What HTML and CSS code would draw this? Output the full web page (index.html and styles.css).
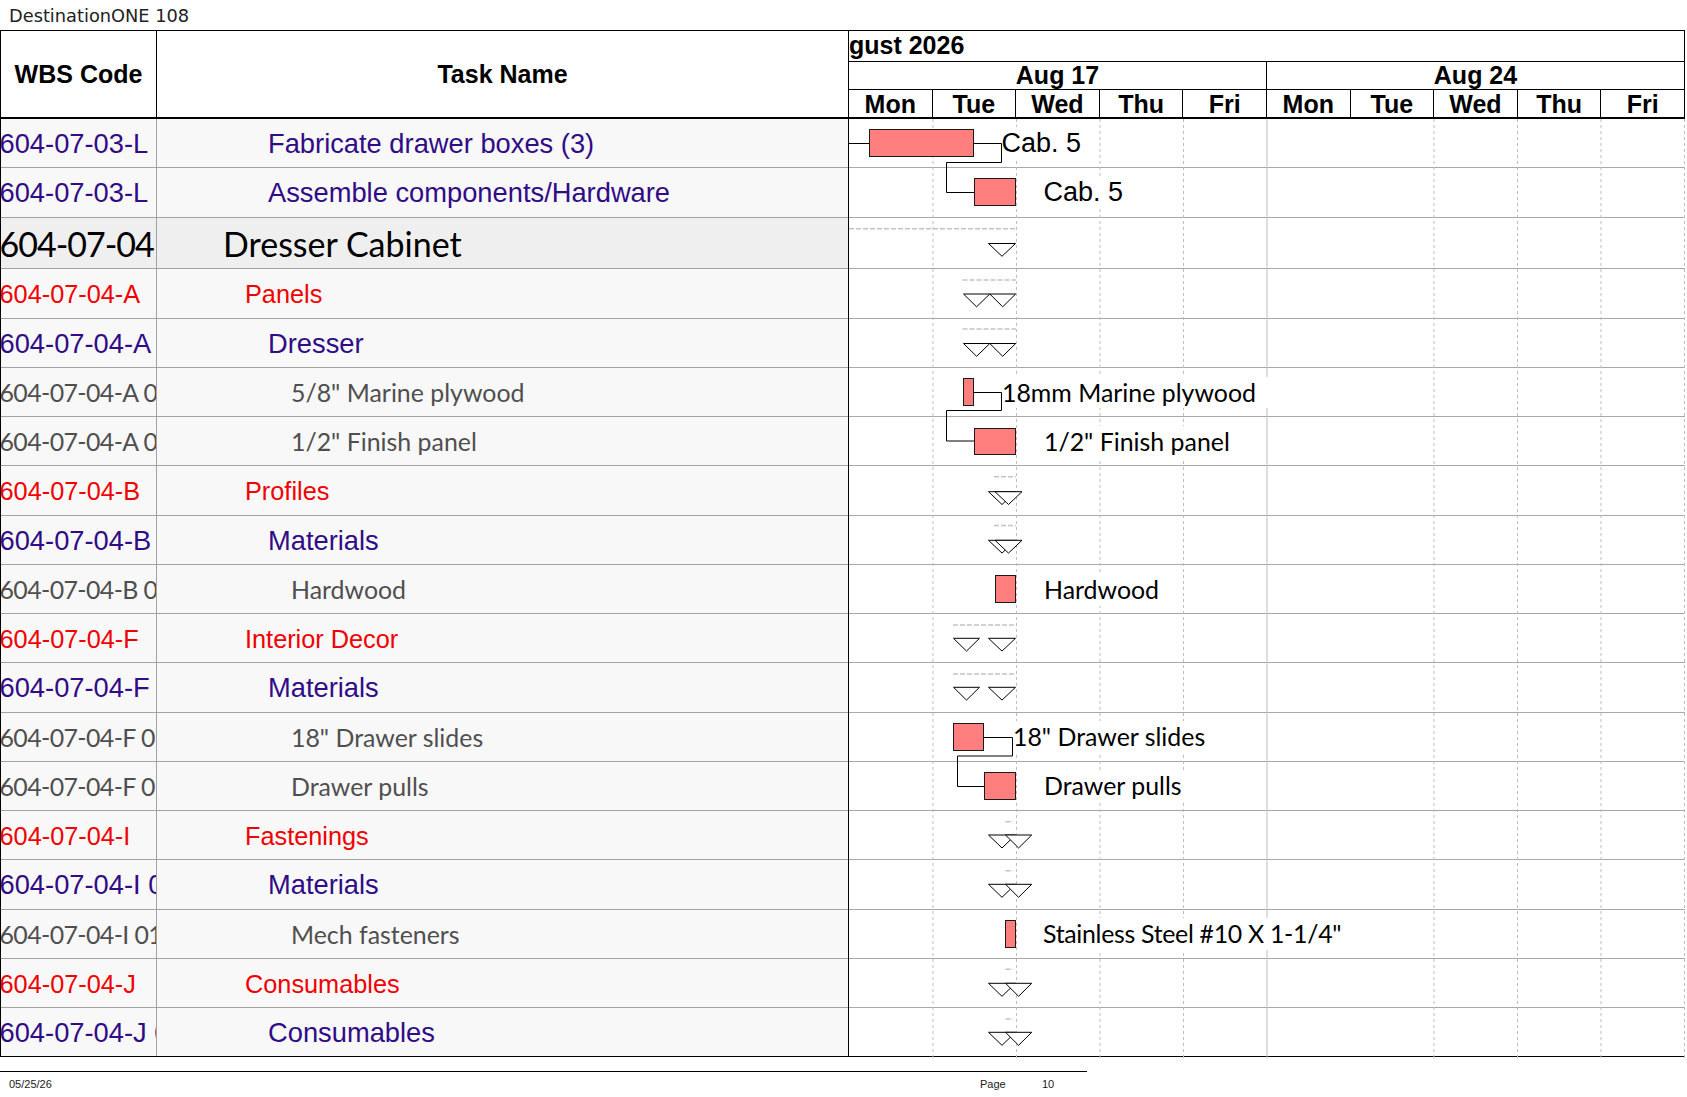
FILE: index.html
```html
<!DOCTYPE html>
<html>
<head>
<meta charset="utf-8">
<title>DestinationONE 108</title>
<link rel="stylesheet" href="styles.css">
</head>
<body>
<div class="title">DestinationONE 108</div>
<div class="sheet">
  <div class="left">
    <div class="lhead">
      <div class="hcell hwbs">WBS Code</div>
      <div class="hcell">Task Name</div>
    </div>
    <div class="lbody">
      <div class="row ta"><div class="wbs">604-07-03-L</div><div class="task">Fabricate drawer boxes (3)</div></div>
      <div class="row ta"><div class="wbs">604-07-03-L</div><div class="task">Assemble components/Hardware</div></div>
      <div class="row tk big"><div class="wbs">604-07-04</div><div class="task">Dresser Cabinet</div></div>
      <div class="row tr"><div class="wbs">604-07-04-A</div><div class="task">Panels</div></div>
      <div class="row ta"><div class="wbs">604-07-04-A</div><div class="task">Dresser</div></div>
      <div class="row tg"><div class="wbs">604-07-04-A 0</div><div class="task">5/8" Marine plywood</div></div>
      <div class="row tg"><div class="wbs">604-07-04-A 0</div><div class="task">1/2" Finish panel</div></div>
      <div class="row tr"><div class="wbs">604-07-04-B</div><div class="task">Profiles</div></div>
      <div class="row ta"><div class="wbs">604-07-04-B</div><div class="task">Materials</div></div>
      <div class="row tg"><div class="wbs">604-07-04-B 0</div><div class="task">Hardwood</div></div>
      <div class="row tr"><div class="wbs">604-07-04-F</div><div class="task">Interior Decor</div></div>
      <div class="row ta"><div class="wbs">604-07-04-F</div><div class="task">Materials</div></div>
      <div class="row tg"><div class="wbs">604-07-04-F 0</div><div class="task">18" Drawer slides</div></div>
      <div class="row tg"><div class="wbs">604-07-04-F 0</div><div class="task">Drawer pulls</div></div>
      <div class="row tr"><div class="wbs">604-07-04-I</div><div class="task">Fastenings</div></div>
      <div class="row ta"><div class="wbs">604-07-04-I 0</div><div class="task">Materials</div></div>
      <div class="row tg"><div class="wbs">604-07-04-I 01</div><div class="task">Mech fasteners</div></div>
      <div class="row tr"><div class="wbs">604-07-04-J</div><div class="task">Consumables</div></div>
      <div class="row ta"><div class="wbs">604-07-04-J 0</div><div class="task">Consumables</div></div>
    </div>
  </div>
  <div class="gantt">
    <div class="ghead">
      <div class="month">gust 2026</div>
      <div class="weeks"><div class="week">Aug 17</div><div class="week">Aug 24</div></div>
      <div class="days">
        <div class="day">Mon</div><div class="day">Tue</div><div class="day">Wed</div><div class="day">Thu</div><div class="day">Fri</div>
        <div class="day">Mon</div><div class="day">Tue</div><div class="day">Wed</div><div class="day">Thu</div><div class="day">Fri</div>
      </div>
    </div>
    <div class="gbody">
      <svg class="grid" width="836" height="939" viewBox="0 0 836 939">
        <g class="dayline">
          <line x1="84" y1="0" x2="84" y2="939"/>
          <line x1="167.5" y1="0" x2="167.5" y2="939"/>
          <line x1="251" y1="0" x2="251" y2="939"/>
          <line x1="334.5" y1="0" x2="334.5" y2="939"/>
          <line x1="585" y1="0" x2="585" y2="939"/>
          <line x1="668.5" y1="0" x2="668.5" y2="939"/>
          <line x1="752" y1="0" x2="752" y2="939"/>
          <line x1="835.5" y1="0" x2="835.5" y2="939"/>
        </g>
        <line class="weekline" x1="418" y1="0" x2="418" y2="939"/>
      </svg>
      <div class="grow"></div><div class="grow"></div><div class="grow big"></div><div class="grow"></div>
      <div class="grow"></div><div class="grow"></div><div class="grow"></div><div class="grow"></div>
      <div class="grow"></div><div class="grow"></div><div class="grow"></div><div class="grow"></div>
      <div class="grow"></div><div class="grow"></div><div class="grow"></div><div class="grow"></div>
      <div class="grow"></div><div class="grow"></div><div class="grow"></div>
      <svg class="chart" width="836" height="939" viewBox="0 0 836 939">
        <g class="lblbg">
          <rect x="153" y="8" width="94" height="32"/>
          <rect x="195" y="57" width="94" height="32"/>
          <rect x="153" y="258" width="268" height="31"/>
          <rect x="195" y="307" width="196" height="32"/>
          <rect x="195" y="455" width="126" height="32"/>
          <rect x="164" y="602" width="204" height="32"/>
          <rect x="195" y="651" width="148" height="32"/>
          <rect x="194" y="799" width="310" height="32"/>
        </g>
        <g class="sumline">
          <line x1="0" y1="109.7" x2="167" y2="109.7"/>
          <line x1="113.5" y1="161" x2="167" y2="161"/>
          <line x1="113.5" y1="210" x2="167" y2="210"/>
          <line x1="145" y1="357.7" x2="167" y2="357.7"/>
          <line x1="145" y1="406.5" x2="167" y2="406.5"/>
          <line x1="104" y1="506" x2="167" y2="506"/>
          <line x1="104" y1="555" x2="167" y2="555"/>
          <line x1="156.5" y1="702.7" x2="164" y2="702.7"/>
          <line x1="156.5" y1="751.7" x2="164" y2="751.7"/>
          <line x1="156.5" y1="850.3" x2="164" y2="850.3"/>
          <line x1="156.5" y1="900" x2="164" y2="900"/>
        </g>
        <g class="link">
          <polyline points="0,24.5 20.5,24.5"/>
          <polyline points="124.5,24.5 152.5,24.5 152.5,43.5 97.5,43.5 97.5,73.5 125.5,73.5"/>
          <polyline points="124.5,273.5 152.5,273.5 152.5,291.5 97.5,291.5 97.5,322 125.5,322"/>
          <polyline points="134.5,618.5 163.5,618.5 163.5,637 108.5,637 108.5,667.5 135.5,667.5"/>
        </g>
        <g class="bar">
          <rect x="20.5" y="10.5" width="104" height="27"/>
          <rect x="125.5" y="59.5" width="41" height="27"/>
          <rect x="114.5" y="259.5" width="10" height="27"/>
          <rect x="125.5" y="309.5" width="41" height="26"/>
          <rect x="146.5" y="456.5" width="20" height="27"/>
          <rect x="104.5" y="604.5" width="30" height="27"/>
          <rect x="135.5" y="653.5" width="31" height="27"/>
          <rect x="156.5" y="801.5" width="10" height="27"/>
        </g>
        <g class="tri">
          <polygon points="139.5,124.5 166.5,124.5 153,137.3"/>
          <polygon points="114.5,175 140.8,175 127.6,187.8"/>
          <polygon points="140.8,175 166.7,175 153.7,187.8"/>
          <polygon points="114.5,224.5 140.8,224.5 127.6,237.3"/>
          <polygon points="140.8,224.5 166.7,224.5 153.7,237.3"/>
          <polygon points="139.5,372.7 166.5,372.7 153,385.5"/>
          <polygon points="146,372.7 173,372.7 159.5,385.5"/>
          <polygon points="139.5,421.3 166.5,421.3 153,434.1"/>
          <polygon points="146,421.3 173,421.3 159.5,434.1"/>
          <polygon points="104.5,519.3 130.5,519.3 117.5,532.1"/>
          <polygon points="139.5,519.3 166.5,519.3 153,532.1"/>
          <polygon points="104.5,568.3 130.5,568.3 117.5,581.1"/>
          <polygon points="139.5,568.3 166.5,568.3 153,581.1"/>
          <polygon points="139.5,716 166.5,716 153,729"/>
          <polygon points="156.5,716 182.7,716 169.6,729"/>
          <polygon points="139.5,765.3 166.5,765.3 153,778.3"/>
          <polygon points="156.5,765.3 182.7,765.3 169.6,778.3"/>
          <polygon points="139.5,864.3 166.5,864.3 153,877.3"/>
          <polygon points="156.5,864.3 182.7,864.3 169.6,877.3"/>
          <polygon points="139.5,913.3 166.5,913.3 153,926.3"/>
          <polygon points="156.5,913.3 182.7,913.3 169.6,926.3"/>
        </g>
        <text class="lbl-a" x="152.5" y="32.7">Cab. 5</text>
        <text class="lbl-a" x="194.5" y="81.7">Cab. 5</text>
        <text class="lbl-c" x="153" y="282.7">18mm Marine plywood</text>
        <text class="lbl-c" x="195" y="332">1/2" Finish panel</text>
        <text class="lbl-c" x="195" y="480">Hardwood</text>
        <text class="lbl-c" x="164" y="627">18" Drawer slides</text>
        <text class="lbl-c" x="195" y="676.3">Drawer pulls</text>
        <text class="lbl-c lbl-tight" x="194" y="824.3">Stainless Steel #10 X 1-1/4"</text>
      </svg>
    </div>
  </div>
</div>
<div class="footer">
  <span class="fdate">05/25/26</span>
  <span class="fpage">Page</span>
  <span class="fnum">10</span>
</div>
</body>
</html>
```

FILE: styles.css
```css
* { box-sizing: border-box; }
html, body { margin: 0; padding: 0; background: #fff; }
body {
  width: 1687px;
  height: 1097px;
  overflow: hidden;
  font-family: "Liberation Sans", Arial, sans-serif;
  color: #000;
}

.title {
  height: 30px;
  padding: 1px 0 0 9px;
  font-family: "DejaVu Sans", sans-serif;
  font-size: 17.8px;
  line-height: 29px;
  color: #222;
}

.sheet {
  display: flex;
  width: 1685px;
  border-top: 1px solid #000;
}

/* ---------- left table ---------- */
.left {
  width: 848px;
  border-left: 1px solid #000;
}
.lhead {
  display: grid;
  grid-template-columns: 156px 691px;
  height: 88px;
  border-bottom: 2px solid #000;
}
.hcell {
  display: flex;
  align-items: center;
  justify-content: center;
  font-weight: bold;
  font-size: 25px;
  padding-top: 1px;
}
.hwbs { border-right: 1px solid #000; }

.row {
  display: grid;
  grid-template-columns: 156px 691px;
  height: 49.25px;
  border-bottom: 1px solid #a2a2a2;
  background: #f8f8f8;
  white-space: nowrap;
}
.row.big { height: 51.8px; background: #efefef; }
.row:last-child { border-bottom-color: #000; }
.wbs {
  border-right: 1px solid #a2a2a2;
  overflow: hidden;
  text-indent: -1.5px;
}
.task { overflow: hidden; }

.ta { color: #300c86; font-size: 27.3px; line-height: 50.3px; }
.tr { color: #f00000; font-size: 25.3px; line-height: 50.3px; }
.tg { color: #4f4f4f; font-family: Lato, "Liberation Sans", sans-serif; font-size: 24.9px; line-height: 49px; }
.tk { color: #000; font-family: Lato, "Liberation Sans", sans-serif; font-size: 34px; line-height: 51px; }

.tg .wbs { letter-spacing: -0.6px; }
.tk .wbs { letter-spacing: -1px; }

.ta .task { padding-left: 111px; }
.tr .task { padding-left: 88px; }
.tg .task { padding-left: 134px; }
.tk .task { padding-left: 66px; }

/* ---------- gantt ---------- */
.gantt {
  width: 837px;
  border-left: 1px solid #000;
}
.ghead {
  height: 88px;
  border-bottom: 2px solid #000;
  border-right: 1px solid #000;
  font-weight: bold;
  font-size: 25px;
  white-space: nowrap;
}
.month {
  height: 31px;
  line-height: 29px;
  border-bottom: 1px solid #000;
  overflow: hidden;
}
.weeks {
  display: flex;
  height: 28px;
  border-bottom: 1px solid #000;
}
.week {
  flex: 1 1 0;
  text-align: center;
  line-height: 27px;
}
.week + .week { border-left: 1px solid #000; }
.days {
  display: flex;
  height: 27px;
}
.day {
  flex: 1 1 0;
  text-align: center;
  line-height: 27px;
  padding-top: 1px;
}
.day + .day { border-left: 1px solid #000; }

.gbody {
  position: relative;
  width: 836px;
}
.grow {
  height: 49.25px;
  border-bottom: 1px solid #a8a8a8;
}
.grow.big { height: 51.8px; }
.grow:last-of-type { border-bottom-color: #000; }

.grid, .chart {
  position: absolute;
  left: 0;
  top: 0;
  overflow: visible;
}
.dayline line { stroke: #bdbdbd; stroke-width: 1; stroke-dasharray: 3 3; }
.weekline { stroke: #bdbdbd; stroke-width: 1; }

.lblbg rect { fill: #fff; }
.sumline line { stroke: #c4c4c4; stroke-width: 1.5; stroke-dasharray: 5 2; }
.link polyline { fill: none; stroke: #000; stroke-width: 1; }
.bar rect { fill: #ff7f7f; stroke: #1a1a1a; stroke-width: 1; }
.tri polygon { fill: #fff; stroke: #000; stroke-width: 1; }
.lbl-a { font-family: "Liberation Sans", Arial, sans-serif; font-size: 27px; fill: #000; }
.lbl-c { font-family: Lato, "Liberation Sans", sans-serif; font-size: 24.9px; fill: #000; }
.lbl-tight { letter-spacing: -0.3px; }

/* ---------- footer ---------- */
.footer {
  display: grid;
  grid-template-columns: 980px 62px auto;
  width: 1087px;
  margin-top: 13.7px;
  border-top: 1px solid #000;
  padding-top: 6.4px;
  font-size: 11px;
  line-height: 13px;
  color: #1a1a1a;
}
.fdate { padding-left: 9px; }
```
